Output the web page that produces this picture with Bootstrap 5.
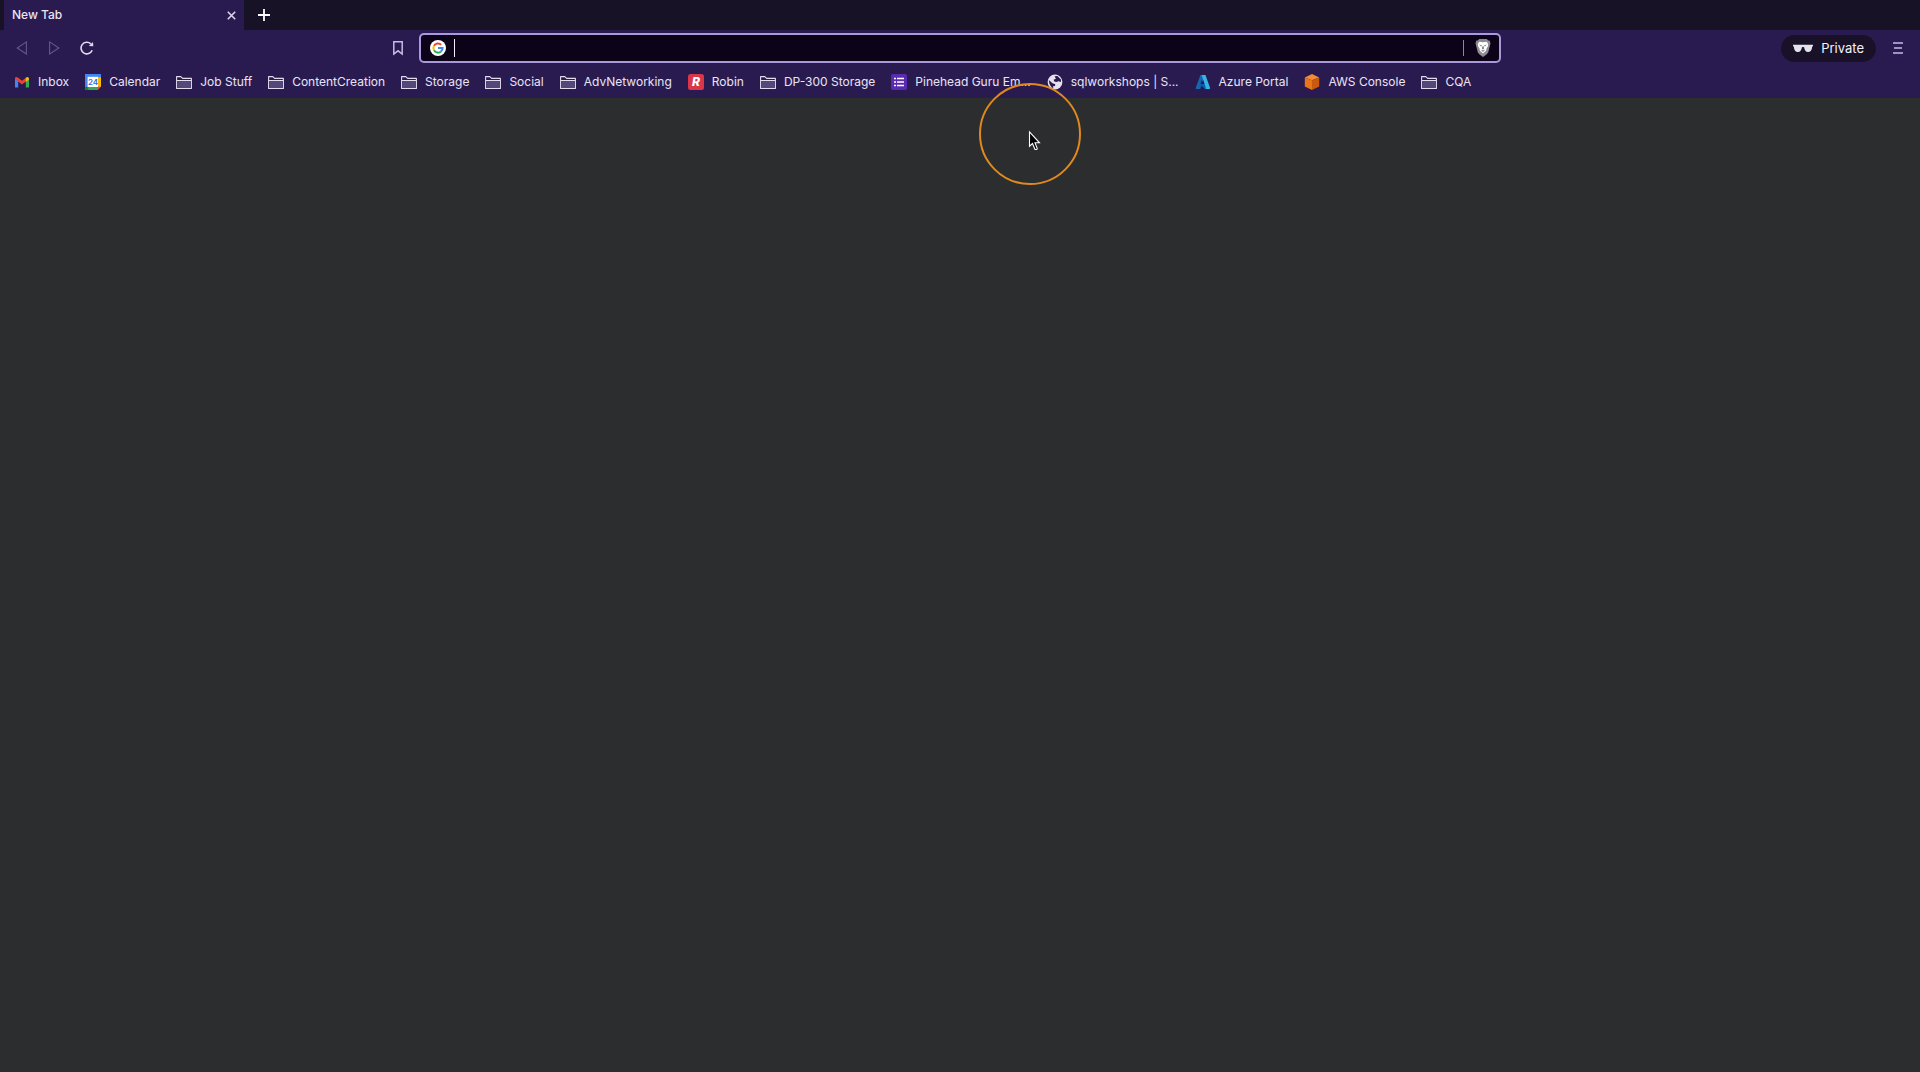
<!DOCTYPE html>
<html lang="en">
<head>
<meta charset="utf-8">
<meta name="viewport" content="width=device-width, initial-scale=1">
<title>New Tab</title>
<link href="https://cdn.jsdelivr.net/npm/bootstrap@5.3.0/dist/css/bootstrap.min.css" rel="stylesheet">
<style>
  body { font-family: Inter, "Liberation Sans", sans-serif; font-size: 12px; line-height: 16px; background: #2b2d2e; color: #e9e4f4; }
  svg { display: block; flex: none; }
  button { color: inherit; }
  .tab-strip { height: 30px; background: #171226; padding-left: 4px; gap: 12px; }
  .tab-item { width: 240px; background: #291b50; padding: 0 8px; font-weight: 500; }
  .tool-bar { height: 36px; background: #291b50; }
  .tool-side { flex: 1 1 0; padding: 0 16px; gap: 16px; }
  .address-box { width: 56.4%; height: 30px; background: #0c0319; border: 2px solid #aa98dc; border-radius: 5px; padding: 0 8px; }
  .address-box input { background: transparent; color: #fff; outline: 0; }
  .text-caret { width: 1px; height: 18px; background: #f4f0fc; margin-left: 7px; }
  .box-rule { width: 1px; height: 16px; background: #8d879b; margin-right: 11px; }
  .private-pill { height: 27px; background: #191128; border-radius: 14px; padding: 0 12px; gap: 8px; color: #f4f1fa; font-size: 13px; line-height: 16px; }
  .bookmark-bar { height: 32px; background: #291b50; padding: 0 14px; gap: 16px; }
  .bookmark-bar a { color: #e9e4f4; gap: 8px; }
  .pointer-halo { left: 979px; top: 83px; pointer-events: none; }
</style>
</head>
<body class="min-vh-100 position-relative">
<svg width="0" height="0" class="position-absolute" aria-hidden="true">
  <symbol id="folder" viewBox="0 0 16 16">
    <path d="M.6 14.4V2.6H4.8L6.6 4.4H15.4V14.4Z" fill="#291b50" stroke="#e2dcee" stroke-width="1.1" stroke-linejoin="round"/>
    <path d="M1.2 7H14.8V13.9H1.2Z" fill="#54477a"/>
    <path d="M1 6.5H15" stroke="#e2dcee"/>
  </symbol>
</svg>

<header>
  <div class="tab-strip d-flex align-items-stretch">
    <div class="tab-item d-flex align-items-center justify-content-between">
      <span>New Tab</span>
      <button class="btn p-0 border-0" aria-label="Close tab">
        <svg width="9" height="9" viewBox="0 0 9 9"><path d="M.8 .8 8.2 8.2M8.2 .8 .8 8.2" stroke="#ddd5ee" stroke-width="1.6"/></svg>
      </button>
    </div>
    <button class="btn p-0 border-0 d-flex align-items-center" aria-label="New tab">
      <svg width="16" height="16" viewBox="0 0 16 16"><path d="M2 8H14M8 2V14" stroke="#fff" stroke-width="1.8"/></svg>
    </button>
  </div>

  <div class="tool-bar d-flex align-items-center">
    <div class="tool-side d-flex align-items-center">
      <button class="btn p-0 border-0" aria-label="Back"><svg width="16" height="16" viewBox="0 0 16 16"><path d="M10.4 1.9V14L1.2 8Z" fill="none" stroke="#65578a" stroke-width="1.1"/></svg></button>
      <button class="btn p-0 border-0" aria-label="Forward"><svg width="16" height="16" viewBox="0 0 16 16"><path d="M1.6 1.9V14L10.8 8Z" fill="none" stroke="#65578a" stroke-width="1.1"/></svg></button>
      <button class="btn p-0 border-0" aria-label="Reload"><svg width="14" height="16" viewBox="0 0 14 16"><path d="M12.2 10.3A5.8 5.8 0 1 1 10.8 3.8" fill="none" stroke="#e2daf0" stroke-width="1.6"/><path d="M8.8 6 13.3 6.2 13 2Z" fill="#e2daf0"/></svg></button>
      <button class="btn p-0 border-0 ms-auto" aria-label="Bookmark this page"><svg width="10" height="16" viewBox="0 0 10 16"><path d="M.8 1.8H9.2V14L5 10.8.8 14Z" fill="none" stroke="#c8bbe4" stroke-width="1.5"/></svg></button>
    </div>

    <div class="address-box d-flex align-items-center">
      <svg width="18" height="18" viewBox="0 0 18 18" aria-hidden="true">
        <circle cx="9" cy="9" r="8" fill="#fff"/>
        <g fill="none" stroke-width="2">
          <path d="M5 6.7A4.6 4.6 0 0 1 12.2 5.7" stroke="#ea4335"/>
          <path d="M5 11.3A4.6 4.6 0 0 1 5 6.7" stroke="#fbbc05"/>
          <path d="M5 11.3A4.6 4.6 0 0 0 12 12.5" stroke="#34a853"/>
          <path d="M12 12.5A4.6 4.6 0 0 0 13.6 9H9" stroke="#4285f4"/>
        </g>
      </svg>
      <span class="text-caret"></span>
      <input type="text" class="border-0 p-0 flex-grow-1" aria-label="Address and search" autocomplete="off">
      <span class="box-rule"></span>
      <button class="btn p-0 border-0" aria-label="Brave Shields">
        <svg width="16" height="20" viewBox="0 0 16 20">
          <path d="M4.2 1H11.8L13.2 2.5 14.6 2.6 15.5 5.2 14.9 7.4 13.2 14.4 11.5 16.6 8 19 4.5 16.6 2.8 14.4 1.1 7.4.5 5.2 1.4 2.6 2.8 2.5Z" fill="#8d8a92"/>
          <path d="M4.4 3.8 8 4.3 11.6 3.8 13.2 6 12.9 8.2 11.4 10.8 11.2 12.8 8 15.4 4.8 12.8 4.6 10.8 3.1 8.2 2.8 6Z" fill="#fff"/>
          <path d="M4 6.4 7 7.4 6.2 8.6ZM12 6.4 9 7.4 9.8 8.6ZM7.4 8.2H8.6L9 10.6 8 11.4 7 10.6ZM5.6 11.6 8 12.6 10.4 11.6 8 14Z" fill="#77747d"/>
        </svg>
      </button>
    </div>

    <div class="tool-side d-flex align-items-center justify-content-end">
      <button class="private-pill btn border-0 d-flex align-items-center">
        <svg width="20" height="9" viewBox="0 0 20 9"><path d="M0 .7H20V2.2L19.2 2.5Q18.8 8 15 8 11.7 8 11.1 3.3 10 2.5 8.9 3.3 8.3 8 5 8 1.2 8 .8 2.5L0 2.2Z" fill="#e6e2ec"/></svg>
        Private
      </button>
      <button class="btn p-0 border-0" aria-label="Menu"><svg width="12" height="14" viewBox="0 0 12 14"><path d="M1 2H11M2 7H10M1 12H11" stroke="#c9b9e6" stroke-width="1.6"/></svg></button>
    </div>
  </div>

  <nav class="bookmark-bar d-flex align-items-center text-nowrap" aria-label="Bookmarks">
    <a href="#" class="d-flex align-items-center text-decoration-none">
      <svg width="16" height="16" viewBox="0 0 16 16"><path d="M1 4.5V13.5H4.2V7Z" fill="#4285f4"/><path d="M11.8 7V13.5H15V4.5Z" fill="#34a853"/><path d="M1 5V4.2Q1.5 2 3.8 3.5L8 6.8 12.2 3.5V7.3L8 10.6 4.2 7.6Z" fill="#ea4335"/><path d="M11.8 3.8Q14.5 1.8 15 4.6V5.5L11.8 8Z" fill="#fbbc04"/></svg>Inbox</a>
    <a href="#" class="d-flex align-items-center text-decoration-none">
      <svg width="16" height="16" viewBox="0 0 16 16"><path d="M0 0H16V16H0Z" fill="#4285f4"/><path d="M12.8 3.2H16V12.8H12.8Z" fill="#fbbc04"/><path d="M3.2 12.8H12.8V16H3.2Z" fill="#34a853"/><path d="M0 12.8H3.2V16H0Z" fill="#188038"/><path d="M12.8 12.8H16L12.8 16Z" fill="#ea4335"/><path d="M12.8 16 16 12.8V16Z" fill="#291b50"/><path d="M2.6 2.8H13V13H2.6Z" fill="#fff"/><text x="8" y="11" font-size="8" font-weight="600" text-anchor="middle" fill="#2f6bd8">24</text></svg>Calendar</a>
    <a href="#" class="d-flex align-items-center text-decoration-none"><svg width="16" height="16"><use href="#folder"/></svg>Job Stuff</a>
    <a href="#" class="d-flex align-items-center text-decoration-none"><svg width="16" height="16"><use href="#folder"/></svg>ContentCreation</a>
    <a href="#" class="d-flex align-items-center text-decoration-none"><svg width="16" height="16"><use href="#folder"/></svg>Storage</a>
    <a href="#" class="d-flex align-items-center text-decoration-none"><svg width="16" height="16"><use href="#folder"/></svg>Social</a>
    <a href="#" class="d-flex align-items-center text-decoration-none"><svg width="16" height="16"><use href="#folder"/></svg>AdvNetworking</a>
    <a href="#" class="d-flex align-items-center text-decoration-none">
      <svg width="16" height="16" viewBox="0 0 16 16"><rect width="16" height="16" rx="2.5" fill="#d9364a"/><text x="8" y="12.4" font-size="12" font-weight="800" font-style="italic" text-anchor="middle" fill="#fff">R</text></svg>Robin</a>
    <a href="#" class="d-flex align-items-center text-decoration-none"><svg width="16" height="16"><use href="#folder"/></svg>DP-300 Storage</a>
    <a href="#" class="d-flex align-items-center text-decoration-none">
      <svg width="16" height="16" viewBox="0 0 16 16"><rect width="16" height="16" rx="2" fill="#5a2bb0"/><path d="M3 4.5H5M3 8H5M3 11.5H5M6 4.5H13M6 8H13M6 11.5H13" stroke="#fff" stroke-width="1.7"/></svg>Pinehead Guru Em...</a>
    <a href="#" class="d-flex align-items-center text-decoration-none">
      <svg width="16" height="16" viewBox="0 0 16 16"><circle cx="8" cy="8" r="7.4" fill="#e6e1ef"/><path d="M1.8 6 5.5 9.3 8.3 10.2 8 12 6 12.2 6.4 14.3Q2.2 12.7 1.8 6ZM7.6 2.2 10.5 2 13.9 5.4 14 8 11.4 7.2 9.5 8 7.3 7.4 6.6 5.8 8.9 4.8Z" fill="#291b50"/></svg>sqlworkshops | S...</a>
    <a href="#" class="d-flex align-items-center text-decoration-none">
      <svg width="16" height="16" viewBox="0 0 16 16"><path d="M5.4 1H10L5.2 15H1.1Q.4 14.8.8 13.8Z" fill="#1766ad"/><path d="M4.3 10H12L13 15H10Z" fill="#0a5dad"/><path d="M6.6 1H10.5L15.1 14Q15.2 14.9 14.2 15H10.5Q11 14.6 10.8 13.8Z" fill="#35b4ea"/><path d="M6.8 5.7 8.6 10H5.5Z" fill="#291b50"/></svg>Azure Portal</a>
    <a href="#" class="d-flex align-items-center text-decoration-none">
      <svg width="16" height="16" viewBox="0 0 16 16"><path d="M8 0 15.2 3.4 8 6.3.8 3.4Z" fill="#f58b35"/><path d="M.8 3.4 8 6.3V16L.8 12.5Z" fill="#e8751a"/><path d="M15.2 3.4 8 6.3V16L15.2 12.5Z" fill="#c9590f"/></svg>AWS Console</a>
    <a href="#" class="d-flex align-items-center text-decoration-none"><svg width="16" height="16"><use href="#folder"/></svg>CQA</a>
  </nav>
</header>

<main aria-label="Page"></main>

<svg class="pointer-halo position-absolute" width="102" height="102" viewBox="0 0 102 102" aria-hidden="true">
  <circle cx="51" cy="51" r="50" fill="none" stroke="#e0891f" stroke-width="2"/>
  <path d="M50.5 49V63.2L53.5 60.5 56 66.5Q58.5 66.6 58.2 65.3L56 59.8H60.5Z" fill="#000" stroke="#fff" stroke-width="1.1"/>
</svg>
<script src="https://cdn.jsdelivr.net/npm/bootstrap@5.3.0/dist/js/bootstrap.bundle.min.js"></script>
</body>
</html>
